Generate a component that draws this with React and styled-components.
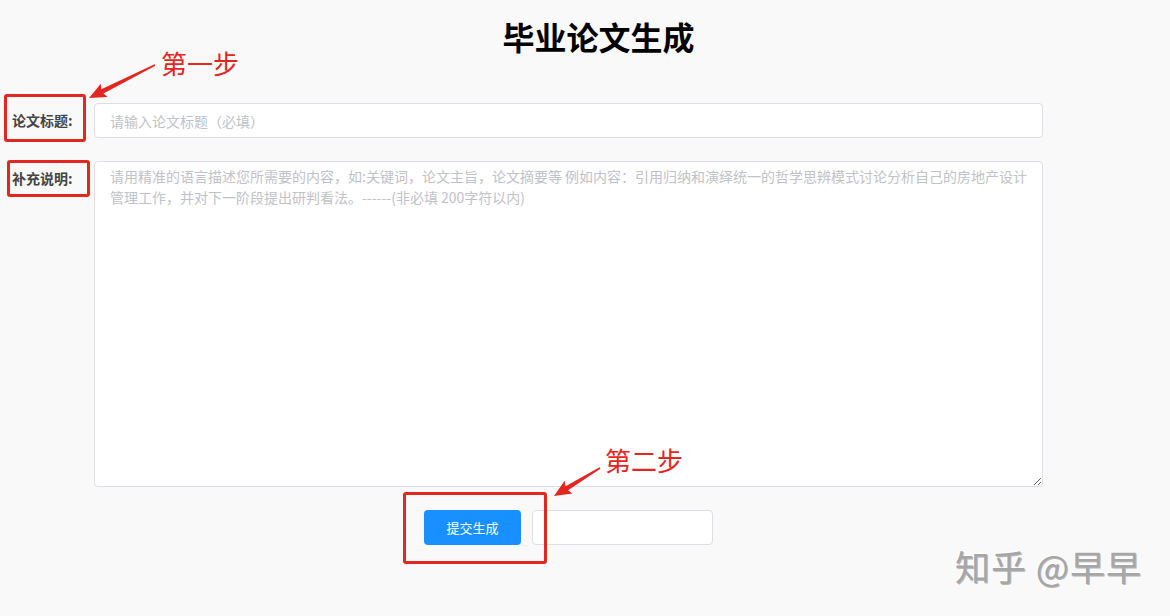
import React from "react";
import styled, { createGlobalStyle } from "styled-components";

const Global = createGlobalStyle`
  html, body { margin: 0; padding: 0; background: #f9f9f9; }
  body { font-family: "Noto Sans CJK SC", "Noto Sans", sans-serif; }
  * { box-sizing: border-box; }
`;

const Page = styled.div`
  position: relative;
  width: 1170px;
  height: 616px;
  padding: 0 12px;
  overflow: hidden;
`;

const Title = styled.h1`
  margin: 0;
  padding: 16px 0 0 142px;
  width: 1031px;
  height: 103px;
  text-align: center;
  font-size: 32px;
  line-height: 40px;
  font-weight: 700;
  color: #000;
`;

const Form = styled.div`
  width: 1031px;
  display: flex;
  flex-direction: column;
  gap: 23px;
`;

const Row = styled.div`
  display: flex;
  align-items: ${(p) => (p.$top ? "flex-start" : "center")};
`;

const Label = styled.label`
  width: 82px;
  flex: none;
  font-size: 14px;
  font-weight: 700;
  color: #444;
  line-height: 21px;
  padding-top: ${(p) => (p.$top ? "7px" : "0")};
`;

const TextInput = styled.input`
  flex: 1;
  height: 35px;
  border: 1px solid #dcdfe6;
  border-radius: 4px;
  background: #fff;
  padding: 0 15px;
  font-family: inherit;
  font-size: 14px;
  outline: none;
  &::placeholder { color: #bfc2c8; }
`;

const TextArea = styled.textarea`
  flex: 1;
  height: 326px;
  border: 1px solid #dcdfe6;
  border-radius: 4px;
  background: #fff;
  padding: 4px 12px 5px 15px;
  font-family: inherit;
  font-size: 14px;
  line-height: 21px;
  outline: none;
  resize: vertical;
  &::placeholder { color: #bfc2c8; }
`;

const Actions = styled.div`
  display: flex;
  justify-content: center;
  gap: 11px;
  padding-left: 82px;
`;

const Button = styled.button`
  width: 97px;
  height: 35px;
  border: none;
  border-radius: 4px;
  background: #1890ff;
  color: #fff;
  font-family: inherit;
  font-size: 13px;
  cursor: pointer;
`;

const SmallInput = styled.input`
  width: 181px;
  height: 35px;
  border: 1px solid #dcdfe6;
  border-radius: 4px;
  background: #fff;
  outline: none;
`;

const Overlay = styled.div`
  position: absolute;
  inset: 0;
  pointer-events: none;
`;

const RedBox = styled.div`
  position: absolute;
  left: ${(p) => p.$x}px;
  top: ${(p) => p.$y}px;
  width: ${(p) => p.$w}px;
  height: ${(p) => p.$h}px;
  border: 3px solid #e3261f;
  border-radius: 3px;
`;

const StepText = styled.div`
  position: absolute;
  left: ${(p) => p.$x}px;
  top: ${(p) => p.$y}px;
  font-size: 26px;
  line-height: 30px;
  color: #e3261f;
  font-weight: 400;
`;

const ArrowSvg = styled.svg`
  position: absolute;
  left: 0;
  top: 0;
  overflow: visible;
`;

const Watermark = styled.div`
  position: absolute;
  left: 955px;
  top: 544px;
  font-size: 35px;
  line-height: 44px;
  font-weight: 400;
  color: #a6a6a6;
  letter-spacing: 1px;
  text-shadow: 1px 1px 0 #b8b8b8, -1px -1px 0 #fff;
`;

function Arrow({ x1, y1, x2, y2 }) {
  const dx = x2 - x1;
  const dy = y2 - y1;
  const L = Math.sqrt(dx * dx + dy * dy);
  const a = (Math.atan2(dy, dx) * 180) / Math.PI;
  const pts = [
    [0, -0.8],
    [L - 15, -2.4],
    [L - 17, -7.5],
    [L, 0],
    [L - 17, 7.5],
    [L - 15, 2.4],
    [0, 0.8],
  ]
    .map((p) => p.join(","))
    .join(" ");
  return (
    <ArrowSvg width="1" height="1">
      <polygon
        points={pts}
        fill="#e3261f"
        transform={`translate(${x1} ${y1}) rotate(${a})`}
      />
    </ArrowSvg>
  );
}

export default function App() {
  return (
    <>
      <Global />
      <Page>
        <Title>毕业论文生成</Title>
        <Form>
          <Row>
            <Label>论文标题:</Label>
            <TextInput placeholder="请输入论文标题（必填）" />
          </Row>
          <Row $top>
            <Label $top>补充说明:</Label>
            <TextArea placeholder="请用精准的语言描述您所需要的内容，如:关键词，论文主旨，论文摘要等 例如内容：引用归纳和演绎统一的哲学思辨模式讨论分析自己的房地产设计管理工作，并对下一阶段提出研判看法。------(非必填 200字符以内)" />
          </Row>
          <Actions>
            <Button>提交生成</Button>
            <SmallInput />
          </Actions>
        </Form>
        <Overlay>
          <RedBox $x={4} $y={94} $w={82} $h={48} />
          <RedBox $x={7} $y={160} $w={83} $h={37} />
          <RedBox $x={403} $y={492} $w={144} $h={72} />
          <StepText $x={161} $y={48}>第一步</StepText>
          <StepText $x={605} $y={445}>第二步</StepText>
          <Arrow x1={155} y1={65} x2={89} y2={98} />
          <Arrow x1={600} y1={468} x2={554} y2={496} />
        </Overlay>
        <Watermark>知乎 @早早</Watermark>
      </Page>
    </>
  );
}
